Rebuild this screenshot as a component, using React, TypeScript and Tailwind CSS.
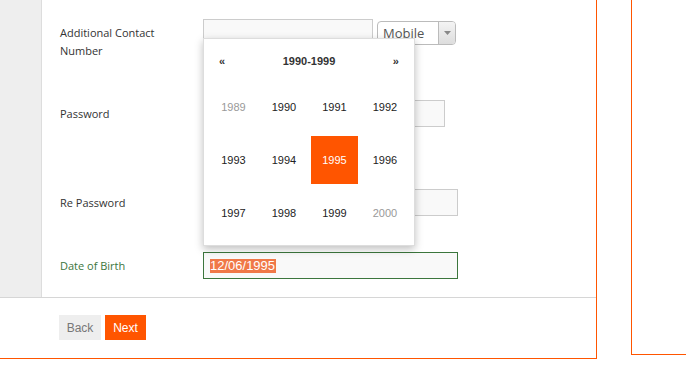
const years = [
  { y: "1989", muted: true },
  { y: "1990" },
  { y: "1991" },
  { y: "1992" },
  { y: "1993" },
  { y: "1994" },
  { y: "1995", active: true },
  { y: "1996" },
  { y: "1997" },
  { y: "1998" },
  { y: "1999" },
  { y: "2000", muted: true },
];

const labelCls =
  "w-[143px] shrink-0 text-[11px] leading-[18px] [font-family:'Open_Sans',sans-serif]";

const App = () => {
  return (
    <div className="relative w-[686px] h-[385px] overflow-hidden bg-white">
      <div className="flex">
        {/* main form panel */}
        <div className="w-[597px] h-[359px] shrink-0 border-r border-b border-[#ff5500] flex flex-col">
          <div className="flex h-[297px] shrink-0">
            <div className="w-[42px] shrink-0 bg-[#eeeeee] border-r border-[#dddddd]" />
            <div className="flex-1 pl-[18px] pt-[19px]">
              <div className="flex items-start">
                <div className={labelCls + " text-[#333] pt-[5px]"}>
                  Additional Contact
                  <br />
                  Number
                </div>
                <div className="flex items-start gap-[4px]">
                  <div className="w-[170px] h-[25px] border border-[#cccccc] bg-[#f9f9f9]" />
                  <div className="mt-[2px] w-[79px] h-[24px] flex border border-[#bbbbbb] rounded-[4px] bg-white overflow-hidden">
                    <div className="flex-1 pl-[5px] text-[13px] leading-[22px] text-[#555] [font-family:'Open_Sans',sans-serif]">
                      Mobile
                    </div>
                    <div className="w-[17px] border-l border-[#bbbbbb] bg-gradient-to-b from-[#f4f4f4] to-[#dddddd] flex items-center justify-center">
                      <svg width="7" height="4" viewBox="0 0 7 4">
                        <path d="M0 0h7L3.5 4z" fill="#888" />
                      </svg>
                    </div>
                  </div>
                </div>
              </div>

              <div className="flex items-center mt-[40px]">
                <div className={labelCls + " text-[#333]"}>Password</div>
                <div className="w-[242px] h-[27px] border border-[#cccccc] bg-[#f9f9f9]" />
              </div>

              <div className="flex items-center mt-[62px]">
                <div className={labelCls + " text-[#333]"}>Re Password</div>
                <div className="w-[255px] h-[27px] border border-[#cccccc] bg-[#f9f9f9]" />
              </div>

              <div className="flex items-center mt-[36px]">
                <div className={labelCls + " text-[#3c763d]"}>Date of Birth</div>
                <div className="w-[255px] h-[27px] border border-[#3c763d] bg-[#f9f9f9] flex items-center pl-[6px]">
                  <span className="bg-[#f07848] text-white text-[13px] leading-[14px] pr-[1px] [font-family:'Liberation_Sans',Arial,sans-serif]">
                    12/06/1995
                  </span>
                </div>
              </div>
            </div>
          </div>

          <div className="border-t border-[#d6d6d6] pt-[17px] pl-[59px] flex gap-[4px]">
            <button className="w-[42px] h-[25px] bg-[#eeeeee] text-[#777] text-[12px] [font-family:'Liberation_Sans',Arial,sans-serif]">
              Back
            </button>
            <button className="w-[41px] h-[25px] bg-[#ff5500] text-white text-[12px] [font-family:'Liberation_Sans',Arial,sans-serif]">
              Next
            </button>
          </div>
        </div>

        {/* right panel */}
        <div className="ml-[34px] flex-1 h-[355px] border-l border-b border-[#ff5500]" />
      </div>

      {/* year picker popup */}
      <div className="absolute left-[203px] top-[38px] w-[212px] h-[208px] bg-white border border-[#dddddd] shadow-[0_3px_8px_rgba(0,0,0,0.25)] pt-[7px] [font-family:'Liberation_Sans',Arial,sans-serif]">
        <div className="h-[30px] flex items-center justify-between px-[15px] text-[11px] text-[#333]">
          <span className="font-bold">«</span>
          <span className="font-bold">1990-1999</span>
          <span className="font-bold">»</span>
        </div>
        <div className="mt-[7px] px-[6px] grid grid-cols-[repeat(4,47px)] gap-x-[3.5px] gap-y-[5px]">
          {years.map((c) => (
            <div
              key={c.y}
              className={
                "h-[48px] flex items-center justify-center text-[11px] " +
                (c.active
                  ? "bg-[#ff5500] text-white"
                  : c.muted
                  ? "text-[#999]"
                  : "text-[#222]")
              }
            >
              {c.y}
            </div>
          ))}
        </div>
      </div>
    </div>
  );
};

export default App;
